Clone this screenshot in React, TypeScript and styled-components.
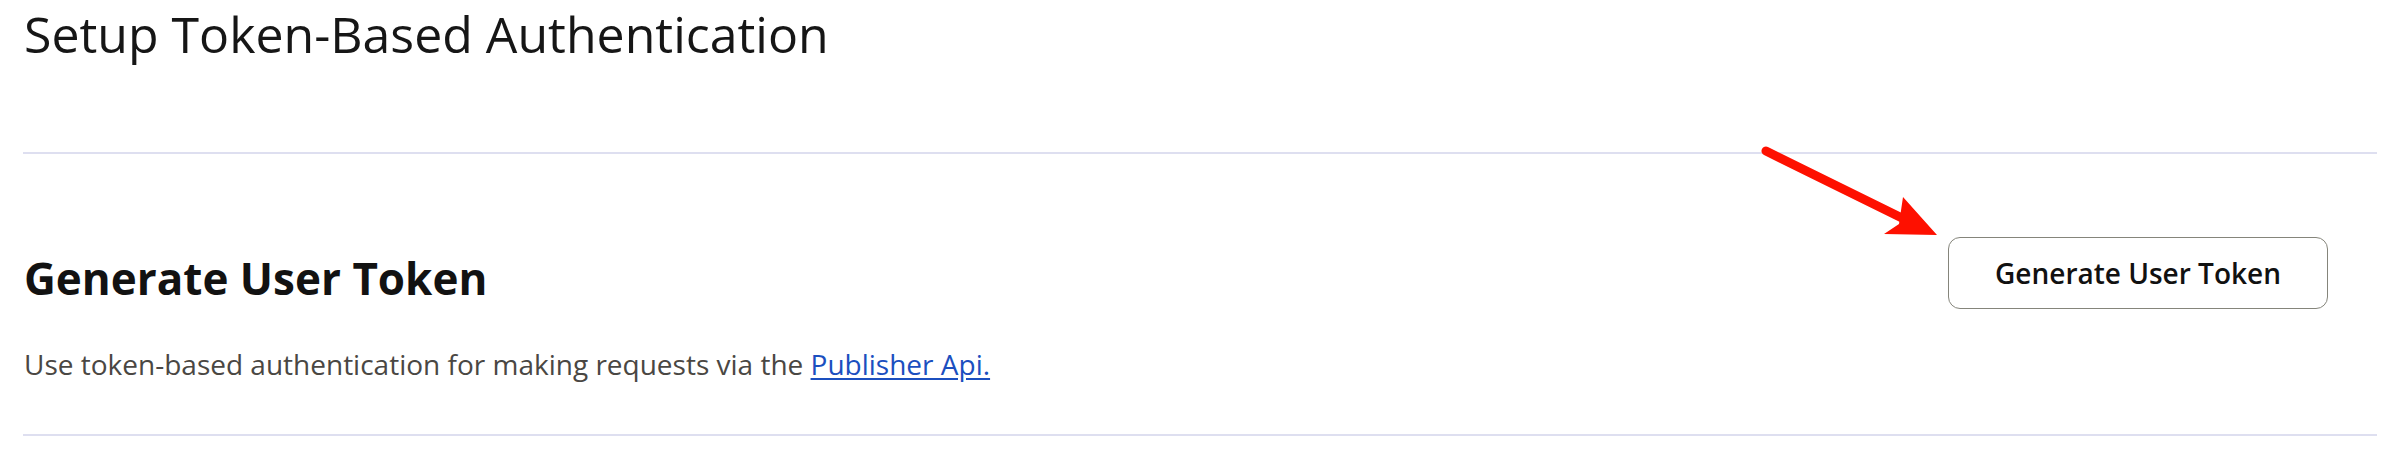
import React from "react";
import styled, { createGlobalStyle } from "styled-components";

const GlobalStyle = createGlobalStyle`
  html, body {
    margin: 0;
    padding: 0;
    background: #ffffff;
  }
  body {
    font-family: "Open Sans", "Noto Sans", sans-serif;
    -webkit-font-smoothing: antialiased;
  }
`;

const Page = styled.div`
  position: relative;
  padding: 2px 10px 0 23px;
  width: 2387px;
  height: 465px;
  box-sizing: border-box;
  overflow: hidden;
`;

const Title = styled.h1`
  margin: 0;
  font-size: 50px;
  line-height: 64px;
  font-weight: 400;
  color: #161616;
  padding-left: 1px;
`;

const Divider = styled.hr<{ $gap: number }>`
  margin: ${(p) => p.$gap}px 0 0 0;
  border: 0;
  height: 2px;
  background: #dedff0;
`;

const Row = styled.section`
  display: flex;
  align-items: flex-start;
  justify-content: space-between;
  padding: 83px 49px 0 1px;
`;

const Info = styled.div`
  display: flex;
  flex-direction: column;
  padding-top: 11px;
`;

const Heading = styled.h2`
  margin: 0;
  font-size: 44px;
  line-height: 60px;
  font-weight: 700;
  color: #121212;
`;

const Description = styled.p`
  margin: 36px 0 0 0;
  font-size: 28px;
  line-height: 40px;
  font-weight: 400;
  color: #4a4743;
`;

const Link = styled.a`
  color: #1b4fbf;
  text-decoration: underline;
  text-underline-offset: 3px;
`;

const Button = styled.button`
  height: 72px;
  width: 380px;
  box-sizing: border-box;
  background: #ffffff;
  border: 1.5px solid #85857b;
  border-radius: 12px;
  font-family: "Open Sans", "Noto Sans", sans-serif;
  font-size: 28px;
  font-weight: 600;
  color: #111111;
  cursor: pointer;
`;

const Annotation = styled.svg`
  position: absolute;
  left: 0;
  top: 0;
  pointer-events: none;
`;

export default function App() {
  return (
    <>
      <GlobalStyle />
      <Page>
        <Title>Setup Token-Based Authentication</Title>
        <Divider $gap={86} />
        <Row>
          <Info>
            <Heading>Generate User Token</Heading>
            <Description>
              Use token-based authentication for making requests via the{" "}
              <Link href="#">Publisher Api.</Link>
            </Description>
          </Info>
          <Button>Generate User Token</Button>
        </Row>
        <Divider $gap={50} />
        <Annotation width="2387" height="465" viewBox="0 0 2387 465">
          <line
            x1="1766"
            y1="151"
            x2="1906"
            y2="220"
            stroke="#fe1000"
            strokeWidth="9"
            strokeLinecap="round"
          />
          <polygon points="1903,197 1937,235 1884,234 1899,224" fill="#fe1000" />
        </Annotation>
      </Page>
    </>
  );
}
